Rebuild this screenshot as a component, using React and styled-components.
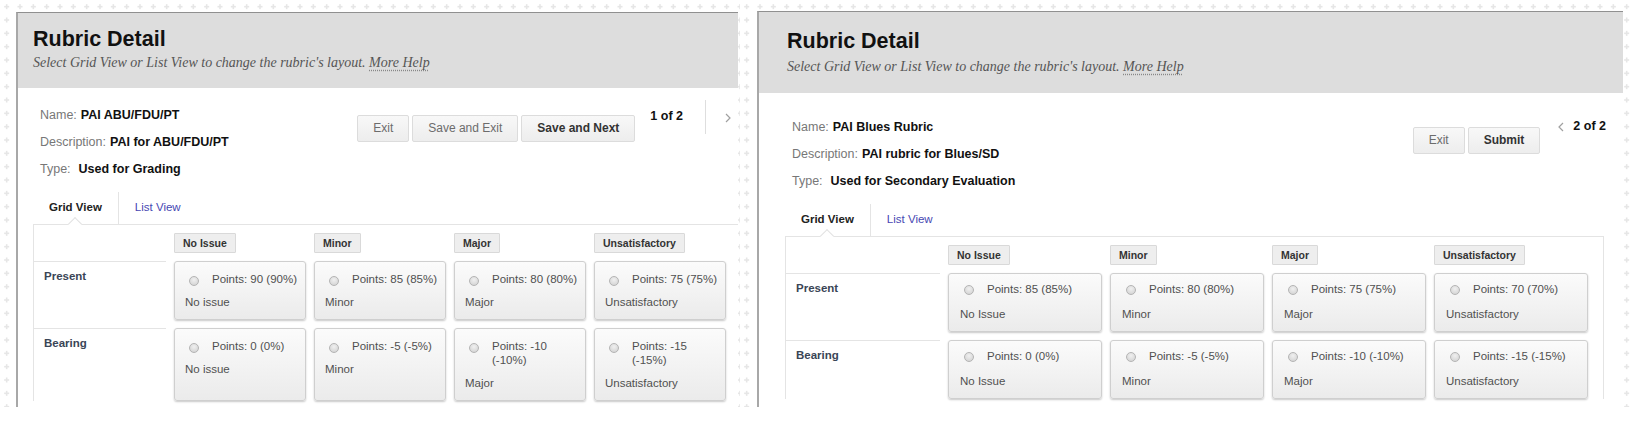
import React from 'react';
import styled, { createGlobalStyle } from 'styled-components';

const plus = (cx, cy) =>
  `<rect x='${cx - 2.5}' y='${cy - 0.8}' width='5' height='1.6'/><rect x='${cx - 0.8}' y='${cy - 2.5}' width='1.6' height='5'/>`;

const centers = [6.67, 20, 33.33];
const tile = `<svg xmlns='http://www.w3.org/2000/svg' width='40' height='40'><g fill='#e6e6e6'>${centers
  .map(y => centers.map(x => plus(x, y)).join(''))
  .join('')}</g></svg>`;
const patternUrl = `url("data:image/svg+xml,${encodeURIComponent(tile)}")`;

const GlobalStyle = createGlobalStyle`
  body {
    margin: 0;
    background: #fff;
    font-family: "Liberation Sans", Arial, sans-serif;
  }
`;

const Page = styled.div`
  display: flex;
  height: 407px;
`;

const Shot = styled.div`
  flex: none;
  box-sizing: border-box;
  width: ${p => p.$w}px;
  height: 407px;
  padding: ${p => p.$pad};
  background: #fff ${patternUrl} 0 0 / 40px 40px repeat;
  display: flex;
  overflow: hidden;
`;

const Panel = styled.div`
  flex: 1;
  min-width: 0;
  background: #fff;
  border-top: 1px solid #909090;
  border-left: 2px solid #a8a8a8;
  overflow: hidden;
`;

const Header = styled.div`
  background: #dddddd;
  padding: ${p => p.$pad};
`;

const Title = styled.h1`
  margin: 0;
  font: bold 21.5px/24px "Liberation Sans", Arial, sans-serif;
  color: #111;
`;

const Subtitle = styled.p`
  margin: ${p => p.$gap}px 0 0;
  font: italic 14px/20px "Liberation Serif", "Times New Roman", serif;
  color: #555;
`;

const HelpLink = styled.span`
  text-decoration: underline dotted #888;
  text-underline-offset: 3px;
`;

const Body = styled.div`
  padding-left: ${p => p.$gutter}px;
`;

const TopRow = styled.div`
  display: flex;
  align-items: flex-start;
`;

const InfoList = styled.div`
  flex: 1;
  margin-top: ${p => p.$top}px;
  padding-left: 7px;
  font-size: 12.5px;
  line-height: 27px;
`;

const InfoRow = styled.div`
  color: #777;
  white-space: nowrap;
`;

const Value = styled.span`
  margin-left: ${p => (p.$wide ? 8 : 4)}px;
  color: #111;
  font-weight: bold;
`;

const Actions = styled.div`
  display: flex;
  align-items: flex-start;
  margin-top: ${p => p.$top}px;
  margin-right: ${p => p.$right}px;
`;

const ButtonGroup = styled.div`
  display: flex;
  gap: 3px;
  margin-top: ${p => p.$top}px;
`;

const Button = styled.button`
  height: 27px;
  padding: 0 15px;
  border: 1px solid #dcdcdc;
  border-radius: 2px;
  background: linear-gradient(#f8f8f8, #ededed);
  font-family: "Liberation Sans", Arial, sans-serif;
  font-size: 12px;
  font-weight: ${p => (p.$primary ? 'bold' : 'normal')};
  color: ${p => (p.$primary ? '#333' : '#6c6c6c')};
`;

const PageCount = styled.div`
  margin: ${p => p.$top}px 0 0 ${p => p.$left}px;
  font-size: 12.5px;
  line-height: 15px;
  font-weight: bold;
  color: #111;
  white-space: nowrap;
`;

const PagerDivider = styled.div`
  width: 0;
  height: 34px;
  margin-left: 22px;
  border-left: 1px solid #dedede;
`;

const Chevron = styled.svg`
  flex: none;
  margin: ${p => p.$top}px 0 0 ${p => p.$left}px;
`;

const TabBar = styled.div`
  display: flex;
  margin-top: 8.5px;
`;

const Tab = styled.div`
  position: relative;
  padding: 8px 16px 10px;
  font-size: 11.5px;
  line-height: 14px;
  font-weight: ${p => (p.$active ? 'bold' : 'normal')};
  color: ${p => (p.$active ? '#222' : '#4747b3')};
  border-right: ${p => (p.$active ? '1px solid #e4e4e4' : 'none')};

  &::after {
    content: '';
    display: ${p => (p.$active ? 'block' : 'none')};
    position: absolute;
    left: 50%;
    bottom: -5px;
    width: 9px;
    height: 9px;
    background: #fff;
    border-top: 1px solid #e2e2e2;
    border-left: 1px solid #e2e2e2;
    transform: translateX(-50%) rotate(45deg);
    z-index: 1;
  }
`;

const GridBox = styled.div`
  border-top: 1px solid #e4e4e4;
  border-left: 1px solid #e4e4e4;
  border-right: ${p => (p.$closed ? '1px solid #e4e4e4' : 'none')};
  margin-right: ${p => p.$right}px;
  padding-top: 8px;
`;

const Grid = styled.div`
  display: grid;
  grid-template-columns: repeat(5, ${p => p.$cell}px);
  gap: 8px;
`;

const ColHead = styled.div`
  justify-self: start;
  box-sizing: border-box;
  height: 20px;
  padding: 0 8px;
  border: 1px solid #d9d9d9;
  border-radius: 1px;
  background: #eeeeee;
  font-size: 10.5px;
  line-height: 18px;
  font-weight: bold;
  color: #333;
  white-space: nowrap;
`;

const RowLabel = styled.div`
  border-top: 1px solid #e4e4e4;
  padding: 7px 10px;
  font-size: 11.5px;
  line-height: 14px;
  font-weight: bold;
  color: #3a4556;
`;

const Cell = styled.div`
  box-sizing: border-box;
  padding: ${p => p.$padTop}px 6px 10px ${p => p.$padLeft}px;
  border: 1px solid #cfcfcf;
  border-radius: 3px;
  background: linear-gradient(#fbfbfb, #ebebeb);
  box-shadow: 0 1px 2px rgba(0, 0, 0, 0.22);
  font-size: 11.5px;
  line-height: 14px;
  color: #505050;
`;

const PointsLine = styled.div`
  display: flex;
  align-items: flex-start;
`;

const PointsText = styled.span`
  flex: 1;
  min-width: 0;
`;

const Radio = styled.span`
  flex: none;
  box-sizing: border-box;
  width: 10px;
  height: 10px;
  margin: 3.5px 13px 0 4px;
  border: 1px solid #b4b4b4;
  border-radius: 50%;
  background: radial-gradient(circle at 50% 35%, #f0f0f0, #cfcfcf);
`;

const Desc = styled.div`
  margin-top: ${p => p.$gap}px;
`;

const chevronPath = { next: '1,1 5,5 1,9', prev: '5,1 1,5 5,9' };

function Arrow({ dir, top, left }) {
  return (
    <Chevron width="6" height="10" viewBox="0 0 6 10" $top={top} $left={left}>
      <polyline points={chevronPath[dir]} fill="none" stroke="#a0a0a0" strokeWidth="1.2" />
    </Chevron>
  );
}

const levels = ['No Issue', 'Minor', 'Major', 'Unsatisfactory'];

const shots = [
  {
    key: 'first',
    width: 740,
    pad: '12px 2px 0 16px',
    headPad: '13.5px 15px 15px',
    subGap: 2.4,
    gutter: 15,
    infoTop: 14.5,
    actionsTop: 12,
    actionsRight: 7,
    buttonsTop: 15,
    name: 'PAI ABU/FDU/PT',
    description: 'PAI for ABU/FDU/PT',
    type: 'Used for Grading',
    buttons: [{ label: 'Exit' }, { label: 'Save and Exit' }, { label: 'Save and Next', primary: true }],
    page: '1 of 2',
    pager: 'next',
    cell: 132,
    gridRight: 0,
    closed: false,
    padTop: 10.3,
    padLeft: 10,
    descGap: 9,
    rows: [
      { label: 'Present', points: ['90 (90%)', '85 (85%)', '80 (80%)', '75 (75%)'], descs: ['No issue', 'Minor', 'Major', 'Unsatisfactory'] },
      { label: 'Bearing', points: ['0 (0%)', '-5 (-5%)', '-10 (-10%)', '-15 (-15%)'], descs: ['No issue', 'Minor', 'Major', 'Unsatisfactory'] },
    ],
  },
  {
    key: 'second',
    width: 890,
    pad: '11px 7px 0 17px',
    headPad: '16.5px 28px 16px',
    subGap: 4.4,
    gutter: 26,
    infoTop: 21.5,
    actionsTop: 26,
    actionsRight: 17,
    buttonsTop: 8,
    name: 'PAI Blues Rubric',
    description: 'PAI rubric for Blues/SD',
    type: 'Used for Secondary Evaluation',
    buttons: [{ label: 'Exit' }, { label: 'Submit', primary: true }],
    page: '2 of 2',
    pager: 'prev',
    cell: 154,
    gridRight: 19,
    closed: true,
    padTop: 8,
    padLeft: 11,
    descGap: 11,
    rows: [
      { label: 'Present', points: ['85 (85%)', '80 (80%)', '75 (75%)', '70 (70%)'], descs: ['No Issue', 'Minor', 'Major', 'Unsatisfactory'] },
      { label: 'Bearing', points: ['0 (0%)', '-5 (-5%)', '-10 (-10%)', '-15 (-15%)'], descs: ['No Issue', 'Minor', 'Major', 'Unsatisfactory'] },
    ],
  },
];

function Pager({ shot }) {
  if (shot.pager === 'next') {
    return (
      <>
        <PageCount $top={9.5} $left={15}>{shot.page}</PageCount>
        <PagerDivider />
        <Arrow dir="next" top={13} left={19} />
      </>
    );
  }
  return (
    <>
      <Arrow dir="prev" top={3} left={18} />
      <PageCount $top={0.5} $left={9}>{shot.page}</PageCount>
    </>
  );
}

function RubricPanel({ shot }) {
  return (
    <Shot $w={shot.width} $pad={shot.pad}>
      <Panel>
        <Header $pad={shot.headPad}>
          <Title>Rubric Detail</Title>
          <Subtitle $gap={shot.subGap}>
            Select Grid View or List View to change the rubric's layout. <HelpLink>More Help</HelpLink>
          </Subtitle>
        </Header>
        <Body $gutter={shot.gutter}>
          <TopRow>
            <InfoList $top={shot.infoTop}>
              <InfoRow>
                Name:<Value>{shot.name}</Value>
              </InfoRow>
              <InfoRow>
                Description:<Value>{shot.description}</Value>
              </InfoRow>
              <InfoRow>
                Type:<Value $wide>{shot.type}</Value>
              </InfoRow>
            </InfoList>
            <Actions $top={shot.actionsTop} $right={shot.actionsRight}>
              <ButtonGroup $top={shot.buttonsTop}>
                {shot.buttons.map(b => (
                  <Button key={b.label} $primary={b.primary}>
                    {b.label}
                  </Button>
                ))}
              </ButtonGroup>
              <Pager shot={shot} />
            </Actions>
          </TopRow>
          <TabBar>
            <Tab $active>Grid View</Tab>
            <Tab>List View</Tab>
          </TabBar>
          <GridBox $closed={shot.closed} $right={shot.gridRight}>
            <Grid $cell={shot.cell}>
              <div />
              {levels.map(l => (
                <ColHead key={l}>{l}</ColHead>
              ))}
              {shot.rows.map(row => (
                <React.Fragment key={row.label}>
                  <RowLabel>{row.label}</RowLabel>
                  {row.points.map((pt, i) => (
                    <Cell key={i} $padTop={shot.padTop} $padLeft={shot.padLeft}>
                      <PointsLine>
                        <Radio />
                        <PointsText>Points: {pt}</PointsText>
                      </PointsLine>
                      <Desc $gap={shot.descGap}>{row.descs[i]}</Desc>
                    </Cell>
                  ))}
                </React.Fragment>
              ))}
            </Grid>
          </GridBox>
        </Body>
      </Panel>
    </Shot>
  );
}

export default function App() {
  return (
    <>
      <GlobalStyle />
      <Page>
        {shots.map(s => (
          <RubricPanel key={s.key} shot={s} />
        ))}
      </Page>
    </>
  );
}
